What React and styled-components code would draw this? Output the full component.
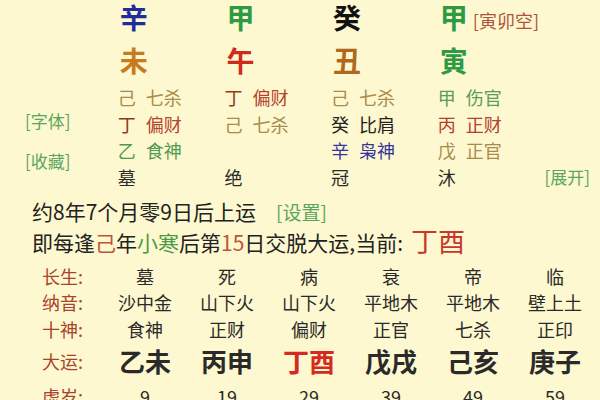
import React from "react";
import styled, { createGlobalStyle } from "styled-components";

const Global = createGlobalStyle`
  html, body {
    margin: 0;
    padding: 0;
    background: #fdf8cf;
  }
  body {
    font-family: "Noto Sans CJK SC", "Noto Sans", sans-serif;
    color: #222;
  }
`;

const Page = styled.div`
  width: 600px;
  height: 400px;
  overflow: hidden;
  background: #fdf8cf;
`;

const Top = styled.div`
  display: flex;
  padding-left: 25px;
`;

const Side = styled.div`
  width: 93px;
  display: flex;
  flex-direction: column;
  padding-top: 110px;
  gap: 18px;
`;

const Link = styled.div`
  color: #5aa65e;
  font-size: 17px;
  line-height: 22px;
  white-space: nowrap;
`;

const Pillar = styled.div`
  width: 107px;
  display: flex;
  flex-direction: column;
`;

const Stem = styled.div`
  height: 35px;
  line-height: 35px;
  font-size: 28px;
  font-weight: 700;
  color: ${(p) => p.$c};
  padding-left: 2px;
  white-space: nowrap;
  & + & {
    margin-top: 8px;
  }
`;

const Kong = styled.span`
  color: #b0553c;
  font-size: 18px;
  font-weight: 400;
  margin-left: 5px;
  vertical-align: 1px;
`;

const HiddenWrap = styled.div`
  margin-top: 6px;
  display: flex;
  flex-direction: column;
`;

const Hidden = styled.div`
  height: 26.5px;
  line-height: 26.5px;
  font-size: 18px;
  white-space: nowrap;
`;

const Part = styled.span`
  color: ${(p) => p.$c};
  & + & {
    margin-left: 10px;
  }
`;

const Extra = styled.div`
  flex: 1;
  display: flex;
  flex-direction: column;
  justify-content: flex-end;
  align-items: flex-end;
  padding-right: 10px;
`;

const Expand = styled(Link)`
  line-height: 26.5px;
`;

const Info = styled.div`
  padding: 7px 0 0 32px;
  font-size: 21px;
  line-height: 29px;
  color: #222;
  white-space: nowrap;
`;

const Hl = styled.span`
  color: ${(p) => p.$c};
`;

const Now = styled.span`
  color: #c8372d;
  font-size: 27px;
  margin-left: 8px;
  vertical-align: -1px;
`;

const SetLink = styled.span`
  color: #5aa65e;
  font-size: 19px;
  margin-left: 20px;
`;

const Table = styled.div`
  display: grid;
  grid-template-columns: 62px repeat(6, 82px);
  padding: 6px 0 0 42px;
  align-items: center;
`;

const Label = styled.div`
  color: #a8432c;
  font-size: 18px;
  height: ${(p) => p.$h}px;
  line-height: ${(p) => p.$h}px;
  white-space: nowrap;
`;

const Cell = styled.div`
  text-align: center;
  font-size: ${(p) => (p.$big ? 26 : 18)}px;
  font-weight: ${(p) => (p.$big ? 700 : 400)};
  color: ${(p) => p.$c || "#2a2a2a"};
  height: ${(p) => p.$h}px;
  line-height: ${(p) => p.$h}px;
  white-space: nowrap;
`;

const TAN = "#a98b4c";
const pillars = [
  {
    stem: ["辛", "#1f2d9c"],
    branch: ["未", "#c87a20"],
    hidden: [
      [["己", TAN], ["七杀", TAN]],
      [["丁", "#8e3a1c"], ["偏财", "#b5442e"]],
      [["乙", "#4f9a4f"], ["食神", "#4f9a4f"]],
    ],
    stage: "墓",
  },
  {
    stem: ["甲", "#2e9a44"],
    branch: ["午", "#d02a1f"],
    hidden: [
      [["丁", "#8e3a1c"], ["偏财", "#b5442e"]],
      [["己", TAN], ["七杀", TAN]],
      [],
    ],
    stage: "绝",
  },
  {
    stem: ["癸", "#111"],
    branch: ["丑", "#b0681e"],
    hidden: [
      [["己", TAN], ["七杀", TAN]],
      [["癸", "#222"], ["比肩", "#222"]],
      [["辛", "#34359c"], ["枭神", "#34359c"]],
    ],
    stage: "冠",
  },
  {
    stem: ["甲", "#2e9a44"],
    branch: ["寅", "#2e9a44"],
    kong: "[寅卯空]",
    hidden: [
      [["甲", "#5a9c55"], ["伤官", "#5a9c55"]],
      [["丙", "#b4412b"], ["正财", "#b4412b"]],
      [["戊", TAN], ["正官", TAN]],
    ],
    stage: "沐",
  },
];

const rows = [
  { label: "长生:", h: 26, cells: ["墓", "死", "病", "衰", "帝", "临"] },
  { label: "纳音:", h: 26, cells: ["沙中金", "山下火", "山下火", "平地木", "平地木", "壁上土"] },
  { label: "十神:", h: 28, cells: ["食神", "正财", "偏财", "正官", "七杀", "正印"] },
  { label: "大运:", h: 36, big: true, cells: ["乙未", "丙申", "丁酉", "戊戌", "己亥", "庚子"] },
  { label: "虚岁:", h: 34, cells: ["9", "19", "29", "39", "49", "59"] },
];

export default function App() {
  return (
    <Page>
      <Global />
      <Top>
        <Side>
          <Link>[字体]</Link>
          <Link>[收藏]</Link>
        </Side>
        {pillars.map((p, i) => (
          <Pillar key={i}>
            <Stem $c={p.stem[1]}>
              {p.stem[0]}
              {p.kong && <Kong>{p.kong}</Kong>}
            </Stem>
            <Stem $c={p.branch[1]}>{p.branch[0]}</Stem>
            <HiddenWrap>
              {p.hidden.map((h, j) => (
                <Hidden key={j}>
                  {h.length
                    ? h.map(([t, c], k) => (
                        <Part key={k} $c={c}>
                          {t}
                        </Part>
                      ))
                    : "\u00a0"}
                </Hidden>
              ))}
              <Hidden>
                <Part $c="#2a2a2a">{p.stage}</Part>
              </Hidden>
            </HiddenWrap>
          </Pillar>
        ))}
        <Extra>
          <Expand>[展开]</Expand>
        </Extra>
      </Top>
      <Info>
        <div>
          约8年7个月零9日后上运<SetLink>[设置]</SetLink>
        </div>
        <div>
          即每逢<Hl $c="#c0533a">己</Hl>年<Hl $c="#4c9a4c">小寒</Hl>后第
          <Hl $c="#c0533a">15</Hl>日交脱大运,当前:
          <Now>丁酉</Now>
        </div>
      </Info>
      <Table>
        {rows.map((r) => (
          <React.Fragment key={r.label}>
            <Label $h={r.h}>{r.label}</Label>
            {r.cells.map((c, i) => (
              <Cell
                key={i}
                $h={r.h}
                $big={r.big}
                $c={r.big && c === "丁酉" ? "#d42a22" : undefined}
              >
                {c}
              </Cell>
            ))}
          </React.Fragment>
        ))}
      </Table>
    </Page>
  );
}
